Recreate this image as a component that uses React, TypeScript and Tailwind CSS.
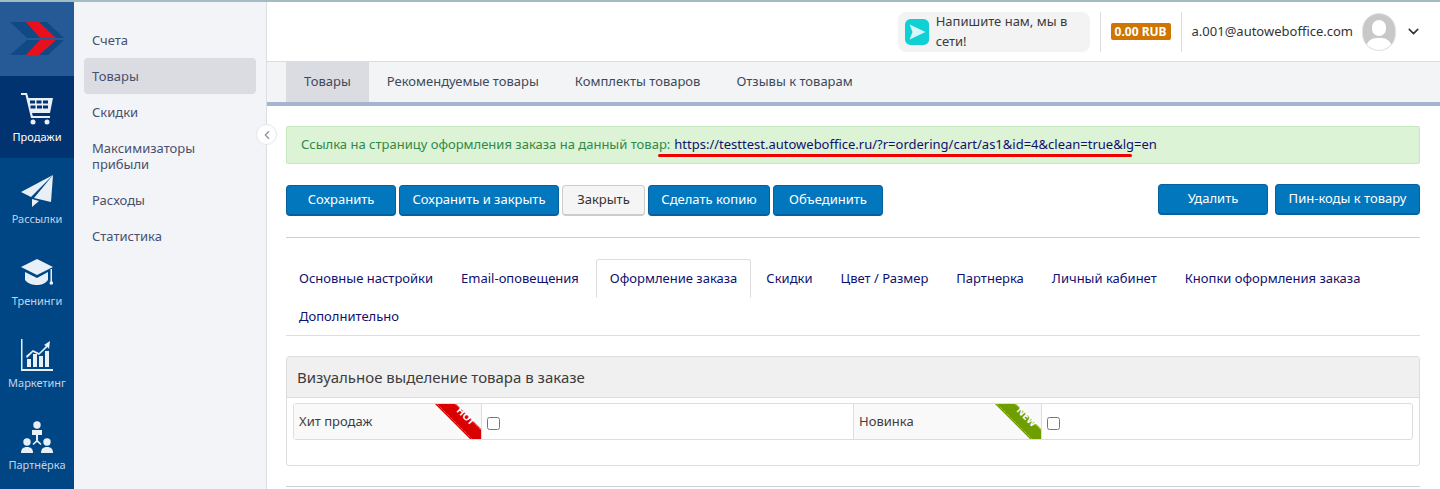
import React from 'react';
import { ChevronDown, ChevronLeft } from 'lucide-react';

const font = 'font-["Noto_Sans",sans-serif]';

const Logo = () => (
  <svg width="54" height="34" viewBox="0 0 54 34">
    <path d="M0 0h16l17 16H17Z" fill="#0f4a86" />
    <path d="M0 33l17-15h16L16 33Z" fill="#0f4a86" />
    <path d="M32 0h16l6 16H... " fill="none" />
    <path d="M32 0h15l7 0 -0 0Z" fill="none" />
    <path d="M32 0h15l17 16H48Z" fill="#0f4a86" transform="translate(-10 0) scale(1)" />
    <path d="M22 33l16-15h16L38 33Z" fill="#0f4a86" transform="translate(0 0)" />
    <path d="M16 0h13l17 16H30Z" fill="#e8101c" />
    <path d="M16 33l14-15h16L29 33Z" fill="#e8101c" />
  </svg>
);

const CartIcon = () => (
  <svg width="32" height="32" viewBox="0 0 32 32" fill="#e8eff7">
    <path d="M0 0h6l1.500 5H32l-3 15H11l.8 3H29v2H10L4.500 2H0Z" />
    <rect x="9" y="7.500" width="5" height="3" fill="#00336f" />
    <rect x="15.500" y="7.500" width="5" height="3" fill="#00336f" />
    <rect x="22" y="7.500" width="5" height="3" fill="#00336f" />
    <rect x="9.500" y="12.500" width="5" height="3" fill="#00336f" />
    <rect x="16" y="12.500" width="5" height="3" fill="#00336f" />
    <rect x="22" y="12.500" width="5" height="3" fill="#00336f" />
    <circle cx="12" cy="29" r="2.500" />
    <circle cx="26" cy="29" r="2.500" />
  </svg>
);

const PlaneIcon = () => (
  <svg width="32" height="32" viewBox="0 0 32 32" fill="#e8eff7">
    <path d="M32 0 0 17l10 5Z" />
    <path d="M32 0 13 23l17 4Z" />
    <path d="M11 24l7 2-7 6Z" />
  </svg>
);

const CapIcon = () => (
  <svg width="32" height="28" viewBox="0 0 32 28" fill="#e8eff7">
    <path d="M16 0 32 8 16 16 0 8Z" />
    <path d="M4 13l12 6 11-6v8c-3 4-7 5-11 5s-9-1-12-5Z" />
    <rect x="29.500" y="10" width="1.500" height="13" />
    <circle cx="30.300" cy="24" r="1.800" />
  </svg>
);

const ChartIcon = () => (
  <svg width="32" height="32" viewBox="0 0 32 32" fill="#e8eff7">
    <path d="M0 0h1.500v30H32v2H0Z" />
    <rect x="6" y="20" width="4" height="8" />
    <rect x="12" y="15" width="4" height="13" />
    <rect x="18" y="17" width="4" height="11" />
    <rect x="24" y="12" width="4" height="16" />
    <path d="M5 17l7-6 6 3 7-7-2-1 6-4-1 8-1.500-2-8.500 8-6-3-6 6Z" />
  </svg>
);

const PartnerIcon = () => (
  <svg width="32" height="33" viewBox="0 0 32 33" fill="#e8eff7">
    <circle cx="16" cy="4" r="3.700" />
    <path d="M11 9h10v5h-4v5l-1 1-1-1v-5h-4Z" />
    <circle cx="6" cy="21" r="3.700" />
    <circle cx="26" cy="21" r="3.700" />
    <path d="M0 32c0-4 2-6 6-6s6 2 6 6Z" />
    <path d="M20 32c0-4 2-6 6-6s6 2 6 6Z" />
    <path d="M15.500 19l-4 4 1 1 3.500-3 3.500 3 1-1-4-4Z" />
  </svg>
);

const railItems = [
  { label: 'Продажи', icon: <CartIcon />, active: true },
  { label: 'Рассылки', icon: <PlaneIcon />, active: false },
  { label: 'Тренинги', icon: <CapIcon />, active: false },
  { label: 'Маркетинг', icon: <ChartIcon />, active: false },
  { label: 'Партнёрка', icon: <PartnerIcon />, active: false },
];

const subItems = ['Счета', 'Товары', 'Скидки', 'Максимизаторы прибыли', 'Расходы', 'Статистика'];
const topTabs = ['Товары', 'Рекомендуемые товары', 'Комплекты товаров', 'Отзывы к товарам'];
const formTabs = ['Основные настройки', 'Email-оповещения', 'Оформление заказа', 'Скидки', 'Цвет / Размер', 'Партнерка', 'Личный кабинет', 'Кнопки оформления заказа', 'Дополнительно'];

const Btn = ({ children, className = '' }: { children: React.ReactNode; className?: string }) => (
  <button className={`h-[31px] rounded-[4px] border border-[#04619d] border-b-2 bg-[#0277bd] text-[13px] text-white ${className}`}>
    {children}
  </button>
);

const Ribbon = ({ label, color, edge }: { label: string; color: string; edge: string }) => (
  <svg width="46" height="36" viewBox="0 0 46 36" className="absolute right-0 top-0">
    <path d="M0 0H21L46 25V36H36Z" fill={color} />
    <path d="M2 0 37 35M20 0 46 26" stroke={edge} strokeWidth="1" strokeDasharray="1 1" fill="none" />
    <text x="0" y="0" transform="translate(21 7) rotate(45)" fill="#fff" fontSize="10" fontWeight="700" fontFamily="Noto Sans, sans-serif">{label}</text>
  </svg>
);

export default function App() {
  return (
    <div className={`h-[489px] w-[1440px] overflow-hidden bg-white ${font}`}>
      <div className="h-[2px] bg-[#a3bcc4]" />
      <div className="flex h-[487px]">
        <aside className="w-[74px] shrink-0 bg-[#004684]">
          <div className="flex h-[74px] items-center justify-center bg-[#255a96] pr-[1px]">
            <Logo />
          </div>
          {railItems.map((item) => (
            <div key={item.label} className={`flex h-[82px] flex-col items-center pt-[16px] ${item.active ? 'bg-[#00336f]' : ''}`}>
              <div className="flex h-[34px] items-center justify-center">{item.icon}</div>
              <span className={`mt-[3px] text-[11px] leading-[16px] ${item.active ? 'text-white' : 'text-[#c3d4e6]'}`}>{item.label}</span>
            </div>
          ))}
        </aside>

        <nav className="relative w-[193px] shrink-0 border-r border-[#dcdee2] bg-[#f3f4f7] px-[10px] pt-[20px]">
          {subItems.map((item) => (
            <div key={item} className={`rounded-[4px] px-[8px] py-[10px] text-[13px] leading-[16px] text-[#47506f] ${item === 'Товары' ? 'bg-[#dbdce1]' : ''}`}>
              {item}
            </div>
          ))}
          <div className="absolute right-[-11px] top-[122px] flex h-[21px] w-[21px] items-center justify-center rounded-full border border-[#e3e5e8] bg-white text-[#8b8f96]">
            <ChevronLeft size={14} />
          </div>
        </nav>

        <main className="min-w-0 flex-1">
          <header className="flex h-[60px] items-center justify-end border-b border-[#dcdcdc] pr-[18px]">
            <div className="flex h-[40px] w-[192px] items-center rounded-[8px] bg-[#f3f3f3] pl-[7px]">
              <svg width="26" height="28" viewBox="0 0 26 28">
                <rect width="26" height="28" rx="6" fill="#0fd0d4" />
                <path d="M5 6l17 8-17 8 3-8Z" fill="#d8f7fa" />
              </svg>
              <span className="ml-[7px] text-[13px] text-[#3b3b3b]">Напишите нам, мы в сети!</span>
            </div>
            <div className="mx-[10px] h-[40px] w-px bg-[#dcdcdc]" />
            <span className="rounded-[2px] bg-[#cf7500] px-[4px] text-[12px] font-bold leading-[17px] text-white">0.00 RUB</span>
            <div className="mx-[10px] h-[40px] w-px bg-[#dcdcdc]" />
            <span className="text-[13px] text-[#333]">a.001@autoweboffice.com</span>
            <div className="relative ml-[9px] h-[38px] w-[34px] overflow-hidden rounded-full border border-[#e4e4e4] bg-[#c8c8c8]">
              <div className="absolute left-[9px] top-[6px] h-[16px] w-[14px] rounded-full bg-white" />
              <div className="absolute left-[3px] top-[24px] h-[20px] w-[26px] rounded-full bg-white" />
            </div>
            <ChevronDown size={17} className="ml-[9px] text-[#333]" strokeWidth={2.2} />
          </header>

          <div className="flex h-[44px] border-b-[4px] border-[#a3b5cf] bg-[#f3f4f6] pl-[19px]">
            {topTabs.map((t, i) => (
              <div key={t} className={`flex items-center px-[18px] text-[13px] text-[#3c4a5a] ${i === 0 ? 'bg-[#dbdce1]' : ''}`}>{t}</div>
            ))}
          </div>

          <div className="pl-[19px] pr-[20px] pt-[20px]">
            <div className="relative flex h-[38px] items-center rounded-[2px] border border-[#c6e7c0] bg-[#dcf3d6] px-[14px] text-[13px]">
              <span className="text-[#2f8a47]">Ссылка на страницу оформления заказа на данный товар:</span>
              <span className="ml-[4px] text-[#10106f]">https://testtest.autoweboffice.ru/?r=ordering/cart/as1&amp;id=4&amp;clean=true&amp;lg=en</span>
              <div className="absolute left-[371px] top-[27px] h-[3px] w-[474px] rounded-full bg-[#f00000]" />
            </div>

            <div className="mt-[20px] flex items-start">
              <div className="flex gap-[3px] pt-[1px]">
                <Btn className="w-[110px]">Сохранить</Btn>
                <Btn className="w-[160px]">Сохранить и закрыть</Btn>
                <button className="h-[31px] w-[83px] rounded-[4px] border border-[#ccc] border-b-2 bg-[#f5f5f5] text-[13px] text-[#333]">Закрыть</button>
                <Btn className="w-[122px]">Сделать копию</Btn>
                <Btn className="w-[110px]">Объединить</Btn>
              </div>
              <div className="ml-auto flex gap-[7px]">
                <Btn className="w-[110px]">Удалить</Btn>
                <Btn className="w-[145px]">Пин-коды к товару</Btn>
              </div>
            </div>

            <hr className="mt-[21px] border-[#d0d0d0]" />

            <div className="mt-[21px] flex flex-wrap border-b border-[#dddddd]">
              {formTabs.map((t) => (
                <div key={t} className={`flex h-[38px] items-center px-[13px] text-[13px] leading-none text-[#10106f] ${t === 'Оформление заказа' ? 'rounded-t-[3px] border border-b-white border-[#ddd] mb-[-1px] h-[39px] text-[#3d3d3d] mx-[2px]' : 'mr-[2px]'}`}>{t}</div>
              ))}
            </div>

            <section className="mt-[20px] h-[110px] rounded-[3px] border border-[#dddddd]">
              <div className="flex h-[41px] items-center border-b border-[#dddddd] bg-[#f0f0f0] pl-[10px] text-[15px] text-[#3d3d3d]">
                Визуальное выделение товара в заказе
              </div>
              <div className="mx-[6px] mt-[5px] flex h-[37px] rounded-[3px] border border-[#dddddd] text-[13px] text-[#3d3d3d]">
                <div className="relative w-[188px] overflow-hidden border-r border-[#dddddd] bg-[#f9f9f9] pl-[5px] pt-[9px] leading-[16px]">
                  Хит продаж
                  <Ribbon label="HOT" color="#d80000" edge="#f77" />
                </div>
                <div className="w-[372px] pl-[5px] pt-[13px] border-r border-[#dddddd]">
                  <input type="checkbox" className="block h-[13px] w-[13px]" />
                </div>
                <div className="relative w-[188px] overflow-hidden border-r border-[#dddddd] bg-[#f9f9f9] pl-[5px] pt-[9px] leading-[16px]">
                  Новинка
                  <Ribbon label="NEW" color="#6f9e00" edge="#b3d36a" />
                </div>
                <div className="flex-1 pl-[5px] pt-[13px]">
                  <input type="checkbox" className="block h-[13px] w-[13px]" />
                </div>
              </div>
            </section>

            <hr className="mt-[20px] border-[#d0d0d0]" />
          </div>
        </main>
      </div>
    </div>
  );
}
